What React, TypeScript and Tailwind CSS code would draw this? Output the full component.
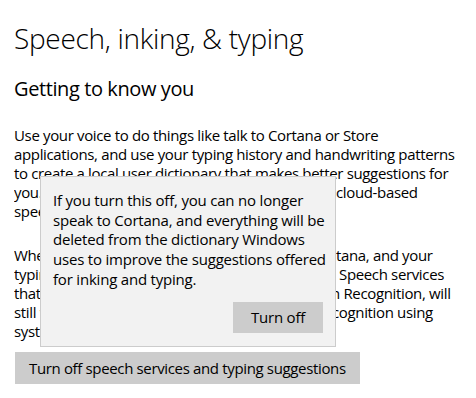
import React from "react";

const font = { fontFamily: '"Open Sans", "Noto Sans", sans-serif' };

function Line({ left, right, leftW }: { left: string; right?: string; leftW?: string }) {
  return (
    <div className="flex whitespace-nowrap h-[19px] leading-[19px]">
      {right !== undefined ? (
        <>
          <span className={`overflow-hidden inline-block ${leftW ?? ""}`}>{left}</span>
          <span>{right}</span>
        </>
      ) : (
        <span>{left}</span>
      )}
    </div>
  );
}

export default function App() {
  return (
    <div className="relative w-[476px] h-[398px] overflow-hidden bg-white text-black" style={font}>
      <div className="pl-[14px] pt-[20px]">
        <h1 className="text-[28px] leading-[36px] font-light tracking-[-0.3px]">Speech, inking, &amp; typing</h1>
        <h2 className="mt-[20px] text-[20px] leading-[26px] font-normal tracking-[-0.4px]">Getting to know you</h2>
        <div className="mt-[24px] text-[15px] tracking-[-0.35px]">
          <Line left="Use your voice to do things like talk to Cortana or Store" />
          <Line left="applications, and use your typing history and handwriting patterns" />
          <Line left="to create a local user dictionary that makes better suggestions for" />
          <Line left="you. Speech services also include" leftW="w-[322px]" right="cloud-based" />
          <Line left="speech recognition." />
        </div>
        <div className="mt-[25px] text-[15px] tracking-[-0.35px]">
          <Line left="When you turn off speech services, you can no longer talk to Cor" leftW="w-[322px]" right="tana, and your" />
          <Line left="typing history will be cleared." leftW="w-[325px]" right="Speech services" />
          <Line left="that don't use the cloud, such as Windows Speec" leftW="w-[317px]" right="h Recognition, will" />
          <Line left="still work, and you can continue to use speech re" leftW="w-[318px]" right="cognition using" />
          <Line left="system settings." />
        </div>
        <div className="mt-[11px]">
          <button className="w-[345px] h-[32px] ml-px bg-[#cccccc] text-[15px] tracking-[-0.35px] text-left pl-[14px] whitespace-nowrap">
            Turn off speech services and typing suggestions
          </button>
        </div>
      </div>

      <div className="absolute left-[40px] top-[176px] w-[296px] h-[171px] bg-[#f2f2f2] border border-[#cccccc] flex flex-col pl-[12px] pr-[12px] pt-[14px] pb-[13px]">
        <p className="text-[15px] leading-[19.7px] tracking-[-0.2px] whitespace-nowrap">
          If you turn this off, you can no longer
          <br />
          speak to Cortana, and everything will be
          <br />
          deleted from the dictionary Windows
          <br />
          uses to improve the suggestions offered
          <br />
          for inking and typing.
        </p>
        <div className="mt-auto flex justify-end">
          <button className="w-[90px] h-[31px] bg-[#cccccc] text-[15px] tracking-[-0.2px]">Turn off</button>
        </div>
      </div>
    </div>
  );
}
